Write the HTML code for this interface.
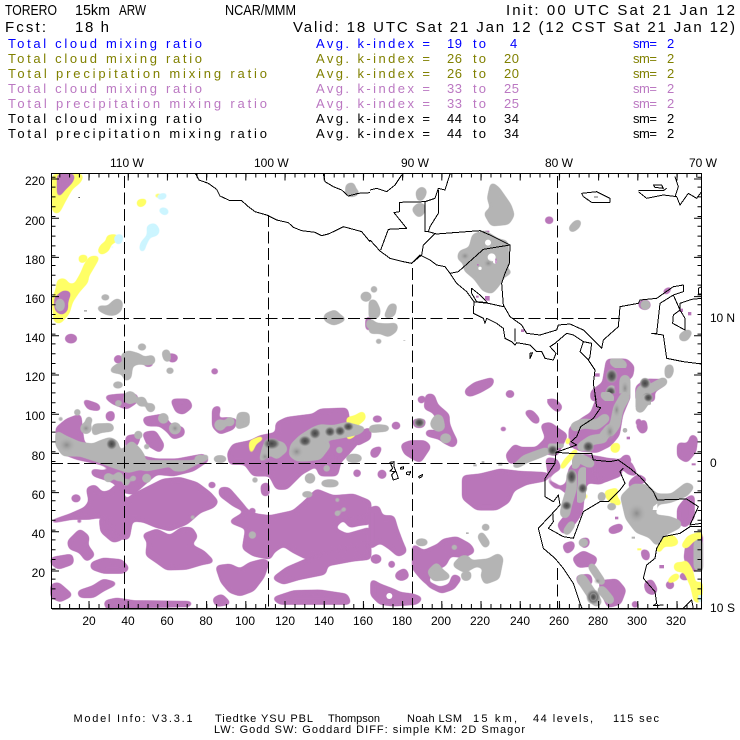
<!DOCTYPE html>
<html><head><meta charset="utf-8"><style>
html,body{margin:0;padding:0;background:#fff}
svg{display:block}
text{font-family:"Liberation Sans",sans-serif}
.p{fill:#b976b9;stroke:#b976b9;stroke-width:3;stroke-linejoin:round;filter:url(#o)}
.g{fill:#b4b4b4;stroke:#b4b4b4;stroke-width:3;stroke-linejoin:round;filter:url(#o)}
.y{fill:#ffff66;stroke:#ffff66;stroke-width:2;stroke-linejoin:round;filter:url(#o)}
.b{fill:#ccf5ff;stroke:#ccf5ff;stroke-width:2;stroke-linejoin:round;filter:url(#o)}
.gl{fill:none;stroke:#b4b4b4;stroke-linecap:round;stroke-linejoin:round;filter:url(#o)}
.c{fill:none;stroke:#000;stroke-width:3;stroke-linejoin:round;shape-rendering:crispEdges}
.r text{font-size:13px}
.a text{font-size:12px}
</style></head><body>
<svg width="740" height="740" viewBox="0 0 740 740" xmlns="http://www.w3.org/2000/svg">
<defs>
<radialGradient id="d"><stop offset="0" stop-color="#444"/><stop offset=".5" stop-color="#666"/><stop offset=".8" stop-color="#999" stop-opacity=".85"/><stop offset="1" stop-color="#b4b4b4" stop-opacity="0"/></radialGradient>
<radialGradient id="m"><stop offset="0" stop-color="#8c8c8c"/><stop offset="1" stop-color="#b4b4b4" stop-opacity="0"/></radialGradient>
<filter id="o" x="-80%" y="-80%" width="260%" height="260%" color-interpolation-filters="sRGB">
<feGaussianBlur stdDeviation="7"/>
<feComponentTransfer><feFuncA type="linear" slope="8" intercept="-2.2"/></feComponentTransfer>
</filter>
</defs>
<rect width="740" height="740" fill="#fff"/>

<!-- zoom region top-left -->
<g transform="translate(0,170) scale(.33333)">
<path class="y" d="M160,15 L248,15 L240,35 L215,55 L195,90 L175,128 L160,125Z"/>
<path class="y" d="M295,245 L305,225 L322,215 L322,198 L352,196 L352,210 L330,222 L325,240 L305,252Z"/>
<path class="y" d="M238,258 L262,258 L258,272 L240,278Z"/>
<path class="y" d="M245,310 L255,285 L270,262 L297,260 L280,290 L262,320 L262,335 L235,365 L215,395 L205,430 L180,458 L165,455 L158,390 L170,360 L175,330 L195,328 L205,345 L225,345Z"/>
<path class="y" d="M412,92 L440,88 L432,105 L415,110Z"/>
<path class="y" d="M462,75 L485,72 L480,82 L465,80Z"/>
<path class="b" d="M470,78 L500,70 L495,85 L475,86Z"/>
<path class="b" d="M475,120 L492,114 L507,125 L495,135Z"/>
<path class="b" d="M443,168 L465,162 L477,182 L470,195 L450,198 L435,225 L430,245 L420,240 L425,218 L445,195Z"/>
<path class="b" d="M345,198 L368,195 L362,220 L348,220Z"/>
<path class="b" d="M330,228 L342,226 L338,240Z"/>
<path class="p" d="M175,15 L222,15 L215,35 L190,60 L175,80Z"/>
<path class="p" d="M166,385 L190,365 L210,368 L200,395 L200,420 L185,432 L168,420Z"/>
<ellipse class="g" cx="180" cy="405" rx="11" ry="17"/>
<ellipse class="p" cx="213" cy="506" rx="16" ry="11"/>
<ellipse class="p" cx="355" cy="568" rx="11" ry="10"/>
<path class="p" d="M505,552 L532,558 L528,572 L510,575Z"/>
<ellipse class="p" cx="644" cy="604" rx="9" ry="7"/>
<path class="p" d="M430,578 L460,578 L455,587 L435,587Z"/>
<path class="g" d="M1040,45 L1060,40 L1065,60 L1078,68 L1060,78 L1040,75Z"/>
<ellipse class="g" cx="316" cy="382" rx="12" ry="6"/>
<path class="g" d="M335,400 L350,388 L365,395 L362,420 L345,433 L322,432 L295,418 L295,410 L325,412Z"/>
<rect x="252" y="420" width="9" height="5" fill="#b4b4b4"/>
<path class="g" d="M975,435 L1005,422 L1020,438 L1036,447 L1015,458 L1000,463 L975,450Z"/>
<ellipse class="g" cx="1098" cy="380" rx="14" ry="12"/>
<ellipse class="g" cx="426" cy="531" rx="11" ry="8"/>
<path class="g" d="M365,555 L385,545 L420,555 L430,565 L460,558 L463,578 L440,583 L420,578 L395,585 L390,625 L375,630 L370,610 L330,603 L350,585 L375,580Z"/>
<path class="g" d="M488,545 L505,540 L510,572 L495,572Z"/>
<ellipse class="g" cx="510" cy="602" rx="10" ry="7"/>
<ellipse class="g" cx="354" cy="645" rx="14" ry="7"/>
<path class="p" d="M1100,445 L1110,440 L1110,480 L1100,478Z"/>
<path class="g" d="M1103,450 L1110,447 L1110,476 L1102,474Z"/>
<rect x="235" y="81" width="5" height="2" fill="#000"/>
</g>

<!-- zoom region bottom-left -->
<g transform="translate(0,395) scale(.33333)">
<path class="p" d="M155,378 L210,360 L255,340 L270,320 L262,280 L285,272 L305,295 L330,290 L350,270 L365,280 L375,320 L400,300 L440,280 L490,255 L540,250 L590,265 L630,295 L652,320 L640,335 L600,350 L560,385 L510,405 L470,395 L430,378 L395,375 L385,430 L360,430 L340,405 L320,375 L300,365 L265,370 L215,370 L155,382Z"/>
<path class="p" d="M430,420 L470,405 L510,425 L545,400 L575,400 L590,425 L570,450 L610,470 L640,500 L610,505 L560,520 L500,522 L470,500 L440,480 L445,440Z"/>
<path class="p" d="M650,515 L690,510 L720,525 L750,505 L790,495 L805,500 L790,545 L760,585 L720,600 L690,590 L665,560Z"/>
<path class="p" d="M660,280 L685,280 L720,320 L745,350 L770,360 L810,365 L880,350 L915,320 L950,285 L1000,305 L1060,300 L1110,320 L1110,380 L1050,395 L1030,370 L1000,400 L1040,420 L1110,400 L1110,450 L1000,470 L920,490 L880,470 L850,450 L820,470 L810,490 L760,480 L730,460 L740,400 L690,380 L740,350 L700,330 L660,300Z"/>
<path class="p" d="M820,550 L860,520 L930,490 L1010,465 L1110,450 L1110,490 L1060,495 L980,510 L975,535 L900,550 L850,565Z"/>
<path class="p" d="M315,620 L350,612 L400,620 L575,622 L570,632 L380,636 L320,640Z"/>
<path class="p" d="M820,610 L880,590 L960,588 L1040,600 L1050,625 L960,625 L840,625Z"/>
<path class="p" d="M640,612 L665,600 L690,625 L650,632Z"/>
<path class="p" d="M155,570 L175,565 L215,600 L180,618 L155,605Z"/>
<path class="p" d="M235,590 L280,575 L310,555 L350,565 L310,585 L280,605 L240,605Z"/>
<path class="p" d="M275,505 L310,492 L365,497 L385,520 L370,532 L310,532 L275,520Z"/>
<path class="p" d="M155,490 L215,480 L218,505 L175,520 L155,505Z"/>
<path class="p" d="M205,440 L240,405 L265,425 L260,450 L282,480 L260,497 L240,470 L210,460Z"/>
<path class="p" d="M300,365 L340,410 L370,430 L340,440 L305,410Z"/>
<path class="p" d="M170,100 L200,75 L240,60 L245,110 L250,145 L290,165 L340,175 L400,180 L470,195 L530,195 L610,180 L625,195 L580,225 L520,240 L470,235 L440,260 L400,295 L370,290 L340,260 L280,240 L275,225 L310,230 L350,225 L300,205 L230,190 L190,175 L175,150Z"/>
<path class="p" d="M380,125 L420,120 L410,150 L380,160Z"/>
<path class="p" d="M430,115 L465,110 L490,150 L480,170 L445,150Z"/>
<path class="p" d="M250,15 L295,30 L300,45 L265,40Z"/>
<path class="p" d="M515,15 L565,15 L575,35 L550,55 L530,50Z"/>
<path class="p" d="M315,5 L360,0 L410,0 L410,20 L380,40 L340,25Z"/>
<path class="p" d="M430,70 L490,60 L510,90 L550,100 L550,120 L520,130 L505,110 L480,90 L440,90Z"/>
<path class="p" d="M320,55 L340,50 L340,75 L322,75Z"/>
<path class="p" d="M640,40 L660,35 L650,75 L680,70 L710,75 L700,100 L660,115 L640,95Z"/>
<path class="p" d="M685,175 L700,150 L750,140 L780,125 L830,115 L830,85 L860,70 L900,65 L940,60 L960,45 L1040,42 L1045,70 L1040,70 L1080,110 L1075,140 L1040,180 L1020,200 L1010,240 L960,240 L950,210 L905,235 L860,280 L830,280 L810,240 L760,240 L735,205 L690,205Z"/>
<path class="p" d="M1065,225 L1082,230 L1075,245 L1062,240Z"/>
<path class="p" d="M785,270 L805,265 L805,300 L788,300Z"/>
<ellipse class="p" cx="228" cy="310" rx="12" ry="9"/>
<ellipse class="p" cx="636" cy="270" rx="10" ry="7"/>
<ellipse class="p" cx="757" cy="348" rx="9" ry="7"/>
<ellipse class="p" cx="238" cy="378" rx="7" ry="5"/>
<path class="p" d="M1060,120 L1110,100 L1110,130 L1070,150Z"/>
<path class="p" d="M980,180 L1010,180 L1010,215 L990,220Z"/>
<path class="p" d="M1040,375 L1110,355 L1110,385 L1050,390Z"/>

<path class="y" d="M750,140 L785,125 L790,130 L765,145 L752,180Z"/>
<path class="y" d="M1040,70 L1065,65 L1090,50 L1095,70 L1065,95 L1065,120 L1040,135 L1050,100Z"/>

<path class="g" d="M170,110 L195,125 L240,145 L280,150 L300,140 L330,130 L350,140 L360,175 L395,140 L420,165 L435,190 L400,200 L500,200 L580,200 L620,180 L625,190 L590,205 L550,225 L520,225 L515,210 L440,225 L420,220 L385,230 L340,215 L300,200 L240,180 L190,180 L170,150Z"/>
<path class="g" d="M800,135 L850,145 L860,165 L830,190 L810,175 L780,200 L790,160Z"/>
<path class="g" d="M875,150 L900,125 L940,100 L960,92 L1000,95 L1040,85 L1065,92 L1095,100 L1075,115 L1030,125 L1000,130 L960,135 L990,150 L960,190 L920,195 L890,195 L870,180Z"/>
<path class="g" d="M715,55 L745,55 L745,90 L710,100Z"/>
<path class="g" d="M280,90 L335,88 L340,105 L300,110 L280,120Z"/>
<g class="g">
<circle cx="258" cy="100" r="14"/><circle cx="425" cy="20" r="12"/><circle cx="452" cy="38" r="11"/><circle cx="490" cy="70" r="13"/><circle cx="525" cy="100" r="15"/><circle cx="690" cy="80" r="11"/><circle cx="660" cy="90" r="14"/><circle cx="415" cy="120" r="10"/><circle cx="325" cy="248" r="11"/><circle cx="356" cy="245" r="11"/><circle cx="440" cy="250" r="11"/><circle cx="378" cy="262" r="8"/><circle cx="400" cy="250" r="7"/><circle cx="930" cy="250" r="13"/><circle cx="1012" cy="315" r="6"/><circle cx="1012" cy="355" r="7"/><circle cx="1032" cy="343" r="6"/><circle cx="578" cy="367" r="6"/><circle cx="757" cy="420" r="9"/><circle cx="765" cy="255" r="7"/><circle cx="980" cy="220" r="8"/><circle cx="1018" cy="165" r="8"/><circle cx="232" cy="52" r="8"/><circle cx="267" cy="75" r="8"/><circle cx="182" cy="72" r="6"/><circle cx="440" cy="155" r="7"/><circle cx="390" cy="8" r="16"/><circle cx="355" cy="25" r="8"/>
<ellipse cx="660" cy="192" rx="18" ry="8"/><ellipse cx="990" cy="265" rx="26" ry="8"/><ellipse cx="922" cy="298" rx="16" ry="6"/><ellipse cx="1062" cy="190" rx="22" ry="10"/><ellipse cx="730" cy="62" rx="16" ry="6"/>
<ellipse cx="540" cy="215" rx="22" ry="10"/><ellipse cx="600" cy="192" rx="15" ry="9"/>
</g>
<ellipse cx="200" cy="150" rx="28" ry="24" fill="url(#m)"/>
<ellipse cx="258" cy="100" rx="14" ry="13" fill="url(#m)"/>
<ellipse cx="525" cy="100" rx="13" ry="13" fill="url(#m)"/>
<ellipse cx="335" cy="147" rx="17" ry="18" fill="url(#d)"/>
<ellipse cx="815" cy="146" rx="26" ry="18" fill="url(#d)"/>
<ellipse cx="795" cy="185" rx="14" ry="14" fill="url(#m)"/>
<ellipse cx="915" cy="138" rx="20" ry="17" fill="url(#d)"/>
<ellipse cx="945" cy="115" rx="18" ry="18" fill="url(#d)"/>
<ellipse cx="990" cy="110" rx="17" ry="16" fill="url(#d)"/>
<ellipse cx="1020" cy="108" rx="17" ry="16" fill="url(#d)"/>
<ellipse cx="1045" cy="95" rx="17" ry="14" fill="url(#d)"/>
<ellipse cx="890" cy="170" rx="22" ry="20" fill="url(#m)"/>
</g>

<!-- zoom region top-right -->
<g transform="translate(370,170) scale(.33333)">
<path class="p" d="M530,143 L546,143 L548,156 L535,160 L526,153Z"/>
<rect x="346" y="182" width="12" height="5" fill="#b976b9"/>
<path class="p" d="M288,660 L315,640 L350,630 L370,625 L365,645 L330,665 L300,677 L288,672Z"/>
<ellipse class="p" cx="420" cy="672" rx="11" ry="9"/>
<path class="p" d="M145,683 L165,683 L165,692 L145,692Z"/>
<path class="p" d="M170,677 L187,677 L187,692 L170,692Z"/>
<rect x="532" y="687" width="15" height="5" fill="#b976b9"/>
<path class="p" d="M882,362 L905,350 L895,368 L882,372Z"/>
<rect x="928" y="416" width="11" height="10" fill="#b976b9"/>
<rect x="954" y="426" width="10" height="10" fill="#b976b9"/>
<rect x="674" y="610" width="15" height="10" fill="#b976b9"/>
<rect x="453" y="478" width="10" height="8" fill="#b976b9"/>
<rect x="345" y="378" width="14" height="14" fill="#b976b9"/>
<rect x="318" y="377" width="8" height="6" fill="#b976b9"/>
<path class="p" d="M810,395 L835,393 L840,410 L825,418 L808,410Z"/>
<path class="p" d="M712,570 L770,570 L790,590 L785,620 L750,640 L750,680 L700,690 L665,690 L665,665 L700,640Z"/>
<path class="p" d="M800,650 L830,630 L892,632 L880,645 L850,665 L852,692 L800,692Z"/>

<path class="g" d="M365,40 L385,55 L420,105 L430,135 L415,160 L365,165 L345,130 L365,115 L355,85Z"/>
<path class="g" d="M140,65 L155,52 L168,62 L160,85 L145,92Z"/>
<path class="g" d="M128,118 L145,102 L163,105 L160,130 L145,140Z"/>
<path class="g" d="M598,175 L615,155 L632,152 L625,172 L605,185Z"/>
<rect x="672" y="78" width="12" height="6" fill="#b4b4b4"/>
<circle class="g" cx="826" cy="405" r="12"/>
<path class="g" d="M930,495 L950,482 L965,485 L950,510 L932,510Z"/>
<path class="g" d="M888,590 L905,585 L908,605 L898,625 L888,620Z"/>
<path class="g" d="M310,195 L345,185 L385,210 L410,215 L415,280 L405,300 L425,305 L400,320 L385,345 L365,368 L340,360 L315,325 L285,300 L283,278 L265,265 L270,245 L300,235Z"/>
<circle cx="354" cy="218" r="9" fill="#fff"/>
<circle cx="365" cy="262" r="12" fill="#fff"/>
<circle cx="330" cy="295" r="5" fill="#fff"/>
<circle cx="375" cy="275" r="6" fill="#fff"/>
<ellipse cx="355" cy="280" rx="16" ry="14" fill="url(#m)"/>
<ellipse cx="285" cy="258" rx="16" ry="14" fill="url(#m)"/>
<rect x="321" y="282" width="5" height="5" fill="#b976b9"/>
<rect x="376" y="266" width="4" height="14" fill="#b976b9"/>
<circle class="g" cx="12" cy="358" r="8"/>
<path class="g" d="M0,392 L15,392 L28,420 L25,440 L0,445Z"/>
<path class="g" d="M45,440 L60,405 L78,403 L72,435 L50,443Z"/>
<path class="g" d="M0,445 L15,462 L50,465 L80,462 L78,482 L55,498 L30,487 L0,488Z"/>
<ellipse class="g" cx="26" cy="514" rx="8" ry="6"/>
<rect x="100" y="510" width="6" height="2" fill="#b4b4b4"/>

<g fill="none" stroke-linecap="round" stroke-linejoin="round">
<path class="gl" stroke-width="32" d="M725,580 L725,625 L725,650"/>
<path class="gl" stroke-width="28" d="M755,585 L735,575"/>
<path class="gl" stroke-width="28" d="M765,630 L765,680 L745,720"/>
<path class="gl" stroke-width="24" d="M682,650 L682,660"/>
<path class="gl" stroke-width="26" d="M725,660 L715,690"/>
<path class="gl" stroke-width="28" d="M825,640 L835,690"/>
<path class="gl" stroke-width="22" d="M835,660 L880,635"/>
<path class="gl" stroke-width="26" d="M815,660 L805,700"/>
</g>
<ellipse cx="725" cy="618" rx="18" ry="22" fill="url(#d)"/>
<ellipse cx="722" cy="665" rx="16" ry="16" fill="url(#d)"/>
<ellipse cx="825" cy="640" rx="17" ry="18" fill="url(#d)"/>
<ellipse cx="832" cy="684" rx="17" ry="18" fill="url(#d)"/>
<ellipse cx="765" cy="655" rx="13" ry="24" fill="url(#m)"/>
</g>

<!-- zoom region bottom-right -->
<g transform="translate(370,395) scale(.33333)">
<path class="p" d="M0,340 L25,335 L35,365 L70,365 L80,400 L95,440 L108,470 L85,482 L60,460 L30,440 L0,460Z"/>
<ellipse class="p" cx="18" cy="492" rx="14" ry="11"/>
<ellipse class="p" cx="65" cy="508" rx="8" ry="9"/>
<path class="p" d="M80,535 L105,522 L115,545 L95,555 L78,548Z"/>
<path class="p" d="M5,555 L30,570 L70,585 L90,595 L130,600 L155,610 L140,625 L70,630 L30,625 L5,600Z"/>
<circle cx="58" cy="603" r="9" fill="#fff"/>
<path class="p" d="M130,450 L160,470 L205,450 L220,435 L260,428 L300,450 L312,470 L280,485 L240,480 L225,510 L190,525 L170,560 L210,580 L240,570 L250,540 L272,550 L250,580 L215,592 L180,575 L150,545 L130,520Z"/>
<path class="p" d="M280,245 L330,240 L390,225 L450,232 L520,235 L540,240 L525,255 L470,265 L430,285 L415,320 L380,342 L320,342 L280,310Z"/>
<path class="p" d="M435,150 L450,160 L500,160 L530,130 L515,90 L540,85 L560,100 L590,120 L560,180 L510,170 L460,190 L420,205 L410,180Z"/>
<path class="p" d="M530,190 L560,195 L570,220 L545,235 L535,260 L560,280 L590,270 L600,220 L640,180 L700,190 L740,200 L775,235 L800,240 L780,200 L760,215 L720,250 L690,265 L650,260 L640,300 L635,350 L620,375 L600,400 L580,415 L565,390 L590,360 L600,300 L560,270 L540,260Z"/>
<path class="p" d="M600,100 L640,70 L665,55 L680,15 L690,0 L780,0 L755,60 L745,120 L720,150 L680,170 L630,165 L600,150Z"/>
<path class="p" d="M670,190 L740,195 L770,210 L780,180 L755,190 L752,240 L700,260 L670,240Z"/>
<path class="p" d="M755,190 L770,180 L782,195 L770,215 L755,210Z"/>
<path class="p" d="M780,260 L805,240 L830,255 L780,280Z"/>
<path class="p" d="M925,145 L955,150 L965,120 L980,130 L975,170 L950,200 L925,185Z"/>
<path class="p" d="M925,340 L945,315 L970,300 L970,370 L945,395 L925,380Z"/>
<path class="p" d="M950,430 L995,415 L995,525 L960,525 L945,490 L950,450Z"/>
<path class="p" d="M800,90 L825,75 L830,105 L815,115Z"/>
<path class="p" d="M800,75 L812,72 L810,90 L800,90Z"/>
<path class="p" d="M145,8 L165,5 L160,22 L148,22Z"/>
<path class="p" d="M170,0 L190,0 L200,30 L235,60 L235,85 L245,110 L260,140 L250,155 L220,140 L210,130 L170,120 L170,108 L205,110 L215,90 L190,50 L165,40Z"/>
<path class="p" d="M465,50 L485,48 L505,70 L505,85 L490,80Z"/>
<ellipse class="p" cx="400" cy="102" rx="9" ry="5"/>
<path class="p" d="M530,15 L555,15 L575,35 L565,50 L545,35Z"/>
<ellipse class="p" cx="22" cy="72" rx="13" ry="7"/>
<ellipse class="p" cx="78" cy="92" rx="11" ry="9"/>
<path class="p" d="M5,165 L35,155 L20,185 L5,185Z"/>
<path class="p" d="M95,150 L120,140 L165,140 L180,155 L150,200 L130,190 L105,175Z"/>
<circle class="p" cx="36" cy="238" r="11"/>
<path class="p" d="M130,75 L165,75 L160,95 L135,95Z"/>
<path class="p" d="M580,450 L610,440 L610,460 L590,475Z"/>
<path class="p" d="M630,435 L655,430 L655,450 L640,458Z"/>
<path class="p" d="M610,490 L640,470 L680,490 L670,510 L625,515Z"/>
<path class="p" d="M690,560 L740,555 L765,585 L750,625 L715,635 L695,590Z"/>
<path class="p" d="M620,545 L660,540 L665,565 L630,570Z"/>
<path class="p" d="M730,395 L755,388 L755,405 L725,415 L715,405Z"/>
<path class="p" d="M815,465 L835,470 L835,495 L820,490Z"/>
<path class="p" d="M825,565 L845,555 L860,585 L850,598 L830,590Z"/>
<ellipse class="p" cx="900" cy="570" rx="10" ry="10"/>
<circle class="p" cx="795" cy="628" r="8"/>
<rect x="735" y="365" width="10" height="8" fill="#b976b9"/>
<rect x="868" y="510" width="14" height="10" fill="#b976b9"/>
<path class="p" d="M930,540 L955,532 L955,552 L935,552Z"/>
<rect x="770" y="125" width="10" height="8" fill="#b976b9"/>
<rect x="965" y="205" width="12" height="6" fill="#b976b9"/>

<path class="y" d="M860,470 L875,430 L910,422 L925,445 L905,452 L880,450 L870,470Z"/>
<path class="y" d="M935,455 L955,425 L995,412 L995,428 L970,435 L950,458Z"/>
<path class="y" d="M940,485 L950,500 L965,525 L975,570 L995,560 L995,590 L990,620 L975,620 L965,575 L945,530 L915,525 L915,505 L950,505Z"/>
<path class="y" d="M890,565 L905,545 L925,535 L925,550 L905,560Z"/>
<path class="y" d="M705,290 L745,280 L735,300 L755,330 L730,325 L712,310Z"/>
<rect x="802" y="460" width="12" height="6" fill="#ffff66"/>
<path class="y" d="M590,130 L600,128 L595,150 L588,148Z"/>
<path class="y" d="M570,220 L585,195 L620,160 L622,170 L590,205 L578,222Z"/>
<path class="y" d="M645,295 L652,295 L650,315 L645,315Z"/>
<path class="y" d="M725,150 L748,145 L745,170 L725,170Z"/>
<rect x="985" y="600" width="12" height="20" fill="#ccf5ff"/>

<path class="g" d="M0,95 L25,92 L55,95 L55,105 L25,108 L0,110Z"/>
<path class="g" d="M185,80 L200,60 L215,65 L222,100 L205,108 L185,95Z"/>
<ellipse class="g" cx="227" cy="130" rx="14" ry="12"/>
<ellipse class="g" cx="155" cy="442" rx="17" ry="8"/>
<ellipse class="g" cx="253" cy="457" rx="8" ry="6"/>
<path class="g" d="M325,425 L335,412 L358,445 L345,458Z"/>
<ellipse class="g" cx="347" cy="397" rx="10" ry="8"/>
<rect x="288" y="412" width="8" height="5" fill="#b4b4b4"/>
<path class="g" d="M250,510 L275,485 L295,485 L300,500 L355,495 L385,478 L397,490 L385,550 L345,565 L335,540 L345,520 L320,510 L285,530 L265,520Z"/>
<path class="g" d="M175,530 L200,505 L215,525 L240,545 L225,552 L190,555Z"/>
<path class="g" d="M275,535 L300,530 L300,552 L280,555Z"/>
<path class="g" d="M440,205 L460,185 L500,170 L530,160 L540,172 L510,185 L470,200 L445,215 L425,215Z"/>
<rect x="385" y="203" width="12" height="9" fill="#b4b4b4"/>
<rect x="310" y="208" width="10" height="6" fill="#b4b4b4"/>
<rect x="335" y="198" width="8" height="6" fill="#b4b4b4"/>
<path class="g" d="M755,305 L790,270 L830,272 L860,300 L905,300 L950,265 L970,275 L950,300 L900,320 L862,325 L850,362 L900,368 L930,380 L930,395 L880,420 L860,450 L840,425 L800,410 L770,370Z"/>
<path d="M850,335 L862,325 L862,345 L848,345Z" fill="#fff"/>
<ellipse cx="800" cy="355" rx="30" ry="32" fill="url(#m)"/>
<ellipse class="g" cx="695" cy="305" rx="9" ry="12"/>
<ellipse class="g" cx="725" cy="335" rx="12" ry="8"/>
<path class="g" d="M975,440 L995,435 L995,530 L975,520Z"/>
<rect x="785" y="425" width="10" height="6" fill="#b4b4b4"/>
<ellipse class="g" cx="640" cy="443" rx="12" ry="10"/>
<g fill="none">
<path class="gl" stroke-width="22" d="M545,155 L570,150"/>
<path class="gl" stroke-width="24" d="M615,95 L640,85 L680,90 L705,70"/>
<path class="gl" stroke-width="26" d="M720,110 L735,90 L745,40 L765,5"/>
<path class="gl" stroke-width="24" d="M635,155 L665,135 L700,130"/>
<path class="gl" stroke-width="24" d="M700,125 L720,100"/>
<path class="gl" stroke-width="24" d="M720,10 L705,0"/>
<path class="gl" stroke-width="24" d="M630,190 L660,205"/>
<path class="gl" stroke-width="22" d="M615,210 L625,185"/>
<path class="gl" stroke-width="26" d="M605,240 L605,280 L590,330 L585,355"/>
<path class="gl" stroke-width="26" d="M640,230 L638,285 L630,310"/>
<path class="gl" stroke-width="18" d="M590,410 L605,388"/>
<path class="gl" stroke-width="24" d="M630,500 L630,505"/>
<path class="gl" stroke-width="18" d="M665,515 L695,560"/>
<path class="gl" stroke-width="26" d="M635,552 L660,590 L680,620"/>
<path class="gl" stroke-width="22" d="M695,585 L720,615"/>
<path class="gl" stroke-width="24" d="M810,40 L830,10"/>
<circle cx="765" cy="106" r="7" fill="#b4b4b4"/>
</g>
<ellipse cx="148" cy="83" rx="17" ry="15" fill="url(#d)"/>
<ellipse cx="548" cy="166" rx="17" ry="17" fill="url(#d)"/>
<ellipse cx="655" cy="155" rx="18" ry="18" fill="url(#d)"/>
<ellipse cx="605" cy="245" rx="16" ry="24" fill="url(#d)"/>
<ellipse cx="638" cy="280" rx="15" ry="17" fill="url(#d)"/>
<ellipse cx="590" cy="332" rx="16" ry="15" fill="url(#d)"/>
<ellipse cx="670" cy="606" rx="22" ry="24" fill="url(#d)"/>
<ellipse cx="670" cy="606" rx="12" ry="14" fill="url(#d)"/>
<ellipse cx="683" cy="558" rx="12" ry="10" fill="url(#m)"/>
<ellipse cx="720" cy="110" rx="16" ry="26" fill="url(#m)"/>
<ellipse cx="835" cy="8" rx="15" ry="14" fill="url(#d)"/>
<ellipse cx="740" cy="45" rx="12" ry="24" fill="url(#m)"/>
</g>

<!-- grid -->
<g stroke="#000" stroke-width="1" fill="none" stroke-dasharray="12 4.5" shape-rendering="crispEdges">
<line x1="124.5" y1="176" x2="124.5" y2="609"/>
<line x1="268.5" y1="215" x2="268.5" y2="609"/>
<line x1="412.5" y1="268" x2="412.5" y2="609"/>
<line x1="557.5" y1="176" x2="557.5" y2="323"/>
<line x1="557.5" y1="343" x2="557.5" y2="450"/>
<line x1="557.5" y1="568" x2="557.5" y2="609"/>
<line x1="51" y1="318.5" x2="473" y2="318.5"/>
<line x1="512" y1="318.5" x2="620" y2="318.5"/>
<line x1="51" y1="463.5" x2="555" y2="463.5"/>
</g>

<!-- coast / borders -->
<g transform="translate(0,170) scale(.33333)">
<path class="c" d="M587,12 L597,30 L625,40 L650,58 L660,78 L690,92 L725,92 L745,110 L765,125 L800,135 L830,150 L865,158 L880,172 L905,182 L945,187 L965,197 L985,192 L1000,185 L1030,170 L1060,178 L1085,185 L1110,215"/>
<path class="c" d="M970,12 L975,35 L1000,50 L1025,60 L1045,78 L1075,70 L1110,68"/>
</g>
<g transform="translate(370,170) scale(.33333)">
<path class="c" d="M0,60 L20,55 L50,65 L75,45 L95,15"/>
<path class="c" d="M0,210 L30,243 L60,265 L100,275 L125,280 L150,255 L180,270 L200,285 L225,290 L240,310 L260,340 L290,365 L312,395 L310,430 L340,445 L345,460 L350,445 L380,460 L400,475 L405,505 L425,515 L435,525 L440,518 L480,525 L500,545 L515,545 L525,565 L550,570 L558,550 L540,530 L555,520 L590,490 L610,495 L640,515 L665,520 L660,560 L655,570 L675,600 L670,640 L678,690"/>
<path class="c" d="M240,12 L225,60 L205,55 L195,85 L165,95 L88,97 L88,125 L72,128 L110,175 L55,178 L32,240"/>
<path class="c" d="M165,95 L165,185 L175,185"/>
<path class="c" d="M205,60 L205,130 L180,170 L175,185 L200,192 L250,188 L330,182 L360,195 L420,225 L418,280 L405,310 L395,340 L400,405 L420,440 L455,465 L470,490 L510,495 L560,480 L565,465 L600,462 L640,480 L665,505 L695,535 L700,510 L745,470 L750,410 L805,400 L810,390 L860,385 L910,350 L940,345 L940,365 L910,375 L870,400 L860,490 L845,490 L880,495 L890,565 L940,575 L995,582"/>
<path class="c" d="M910,375 L930,420 L910,435 L908,460 L945,480 L945,445 L930,420 L930,400 L965,388 L995,385"/>
<path class="c" d="M195,190 L160,225 L155,255 L125,280"/>
<path class="c" d="M240,310 L265,305 L340,238 L420,225"/>
<path class="c" d="M305,355 L330,375 L352,398 L320,395 L305,370Z"/>
<path class="c" d="M310,395 L355,400 L400,410"/>
<path class="c" d="M435,475 L435,515"/>
<path class="c" d="M640,515 L630,545 L655,570"/>
<path class="c" d="M635,70 L680,65 L720,85 L720,97 L665,97 L640,80Z"/>
<path class="c" d="M850,45 L875,45 L880,55 L855,52Z"/>
<path class="c" d="M805,62 L880,62 L890,55"/>
<path class="c" d="M805,65 L830,85 L880,75 L920,80 L930,105 L955,70 L980,85 L995,65"/>
<path class="c" d="M915,20 L925,50 L915,80"/>
<path class="c" d="M985,355 L995,350 L995,372 L985,372Z"/>
<path class="c" d="M480,550 L488,548 L480,565Z"/>
</g>
<g transform="translate(370,395) scale(.33333)">
<path class="c" d="M675,0 L680,35 L692,38 L670,70 L632,95 L620,125 L603,140 L620,150 L558,172 L555,205 L525,250 L525,305 L550,320 L565,300 L570,330 L550,352 L505,400 L520,460 L555,490 L580,520 L610,565 L630,625 L636,640"/>
<path class="c" d="M558,172 L600,175 L665,175 L670,195 L720,200 L745,195 L780,220 L810,245 L850,290 L862,315 L950,312 L985,335 L960,390 L995,385"/>
<path class="c" d="M760,220 L750,230 L765,265 L750,285 L715,320 L690,320 L640,350 L625,390 L610,430 L580,425 L535,400 L550,380 L548,352"/>
<path class="c" d="M995,395 L960,395 L930,415 L880,425 L860,460 L855,490 L830,510 L820,550 L855,590 L860,625 L850,632 L880,630"/>
<path class="c" d="M940,640 L965,615 L970,640"/>
<path class="c" d="M60,202 L72,200 L72,215 L80,235 L85,250 L70,255 L65,240 L75,230 L60,228 L68,220Z"/>
<path class="c" d="M92,218 L100,215 L100,222 L92,222Z"/>
<path class="c" d="M110,232 L122,230 L118,240 L110,238Z"/>
<path class="c" d="M146,245 L158,238 L155,246 L148,249Z"/>
</g>

<!-- frame -->
<rect x="51.5" y="173.5" width="650" height="435" fill="none" stroke="#000" stroke-width="1" shape-rendering="crispEdges"/>
<g stroke="#000" fill="none">
<line x1="59.3" y1="175.5" x2="702" y2="175.5" stroke-width="4" stroke-dasharray="1 8.8"/>
<line x1="88.5" y1="177" x2="702" y2="177" stroke-width="7" stroke-dasharray="1 38.2"/>
<line x1="59.3" y1="606" x2="702" y2="606" stroke-width="4" stroke-dasharray="1 8.8"/>
<line x1="88.5" y1="604.5" x2="702" y2="604.5" stroke-width="7" stroke-dasharray="1 38.2"/>
<line x1="53.5" y1="609" x2="53.5" y2="173" stroke-width="4" stroke-dasharray="1 8.8"/>
<line x1="55" y1="571.5" x2="55" y2="173" stroke-width="8" stroke-dasharray="1 38.2"/>
<line x1="699.5" y1="609" x2="699.5" y2="173" stroke-width="4" stroke-dasharray="1 8.8"/>
<line x1="698" y1="571.5" x2="698" y2="173" stroke-width="8" stroke-dasharray="1 38.2"/>
</g>
<line x1="52" y1="609" x2="702" y2="609" stroke="#000" stroke-width="1"/>

<!-- header -->
<g font-size="15" fill="#000">
<text x="5" y="15" textLength="52" lengthAdjust="spacingAndGlyphs">TORERO</text>
<text x="75" y="15" textLength="35" lengthAdjust="spacingAndGlyphs">15km</text>
<text x="119" y="15" textLength="27" lengthAdjust="spacingAndGlyphs">ARW</text>
<text x="225" y="15" textLength="71" lengthAdjust="spacingAndGlyphs">NCAR/MMM</text>
<text x="506" y="15" textLength="229" lengthAdjust="spacing">Init: 00 UTC Sat 21 Jan 12</text>
<text x="5" y="32" textLength="41" lengthAdjust="spacing">Fcst:</text>
<text x="75" y="32" textLength="34" lengthAdjust="spacing">18 h</text>
<text x="293" y="32" textLength="442" lengthAdjust="spacing">Valid: 18 UTC Sat 21 Jan 12 (12 CST Sat 21 Jan 12)</text>
</g>
<g class="r">
<g fill="#0000ff"><text x="8" y="48" textLength="194">Total cloud mixing ratio</text><text x="316" y="48" textLength="114">Avg. k-index =</text><text x="447" y="48" textLength="15">19</text><text x="473" y="48" textLength="13">to</text><text x="510" y="48">4</text><text x="633" y="48" textLength="24">sm=</text><text x="667" y="48">2</text></g>
<g fill="#808000"><text x="8" y="63" textLength="194">Total cloud mixing ratio</text><text x="316" y="63" textLength="114">Avg. k-index =</text><text x="447" y="63" textLength="15">26</text><text x="473" y="63" textLength="13">to</text><text x="504" y="63" textLength="15">20</text><text x="633" y="63" textLength="24">sm=</text><text x="667" y="63">2</text></g>
<g fill="#808000"><text x="8" y="78" textLength="259">Total precipitation mixing ratio</text><text x="316" y="78" textLength="114">Avg. k-index =</text><text x="447" y="78" textLength="15">26</text><text x="473" y="78" textLength="13">to</text><text x="504" y="78" textLength="15">20</text><text x="633" y="78" textLength="24">sm=</text><text x="667" y="78">2</text></g>
<g fill="#bb78c2"><text x="8" y="93" textLength="194">Total cloud mixing ratio</text><text x="316" y="93" textLength="114">Avg. k-index =</text><text x="447" y="93" textLength="15">33</text><text x="473" y="93" textLength="13">to</text><text x="504" y="93" textLength="15">25</text><text x="633" y="93" textLength="24">sm=</text><text x="667" y="93">2</text></g>
<g fill="#bb78c2"><text x="8" y="108" textLength="259">Total precipitation mixing ratio</text><text x="316" y="108" textLength="114">Avg. k-index =</text><text x="447" y="108" textLength="15">33</text><text x="473" y="108" textLength="13">to</text><text x="504" y="108" textLength="15">25</text><text x="633" y="108" textLength="24">sm=</text><text x="667" y="108">2</text></g>
<g fill="#000"><text x="8" y="123" textLength="194">Total cloud mixing ratio</text><text x="316" y="123" textLength="114">Avg. k-index =</text><text x="447" y="123" textLength="15">44</text><text x="473" y="123" textLength="13">to</text><text x="504" y="123" textLength="15">34</text><text x="633" y="123" textLength="24">sm=</text><text x="667" y="123">2</text></g>
<g fill="#000"><text x="8" y="138" textLength="259">Total precipitation mixing ratio</text><text x="316" y="138" textLength="114">Avg. k-index =</text><text x="447" y="138" textLength="15">44</text><text x="473" y="138" textLength="13">to</text><text x="504" y="138" textLength="15">34</text><text x="633" y="138" textLength="24">sm=</text><text x="667" y="138">2</text></g>
</g>

<!-- axis labels -->
<g class="a" fill="#000">
<text x="110" y="167">110 W</text><text x="254" y="167">100 W</text><text x="401" y="167">90 W</text><text x="545" y="167">80 W</text><text x="689" y="167">70 W</text>
<text x="710" y="322" textLength="25">10 N</text><text x="710" y="467">0</text><text x="710" y="612" textLength="25">10 S</text>
<g text-anchor="end">
<text x="45" y="185">220</text><text x="45" y="225">200</text><text x="45" y="264">180</text><text x="45" y="303">160</text><text x="45" y="342">140</text><text x="45" y="381">120</text><text x="45" y="420">100</text><text x="45" y="460">80</text><text x="45" y="499">60</text><text x="45" y="538">40</text><text x="45" y="577">20</text>
</g>
<g text-anchor="middle">
<text x="89" y="625">20</text><text x="128" y="625">40</text><text x="167" y="625">60</text><text x="206" y="625">80</text><text x="245" y="625">100</text><text x="285" y="625">120</text><text x="324" y="625">140</text><text x="363" y="625">160</text><text x="402" y="625">180</text><text x="441" y="625">200</text><text x="480" y="625">220</text><text x="520" y="625">240</text><text x="559" y="625">260</text><text x="598" y="625">280</text><text x="637" y="625">300</text><text x="676" y="625">320</text>
</g>
</g>

<!-- footer -->
<g font-size="11" fill="#000">
<text x="73.5" y="722" textLength="119">Model Info: V3.3.1</text>
<text x="215" y="722" textLength="98">Tiedtke YSU PBL</text>
<text x="328" y="722" textLength="52">Thompson</text>
<text x="407" y="722" textLength="55">Noah LSM</text>
<text x="473" y="722" textLength="44">15 km,</text>
<text x="533" y="722" textLength="60">44 levels,</text>
<text x="613" y="722" textLength="46">115 sec</text>
<text x="214" y="733" textLength="311">LW: Godd SW: Goddard DIFF: simple KM: 2D Smagor</text>
</g>
</svg>
</body></html>
